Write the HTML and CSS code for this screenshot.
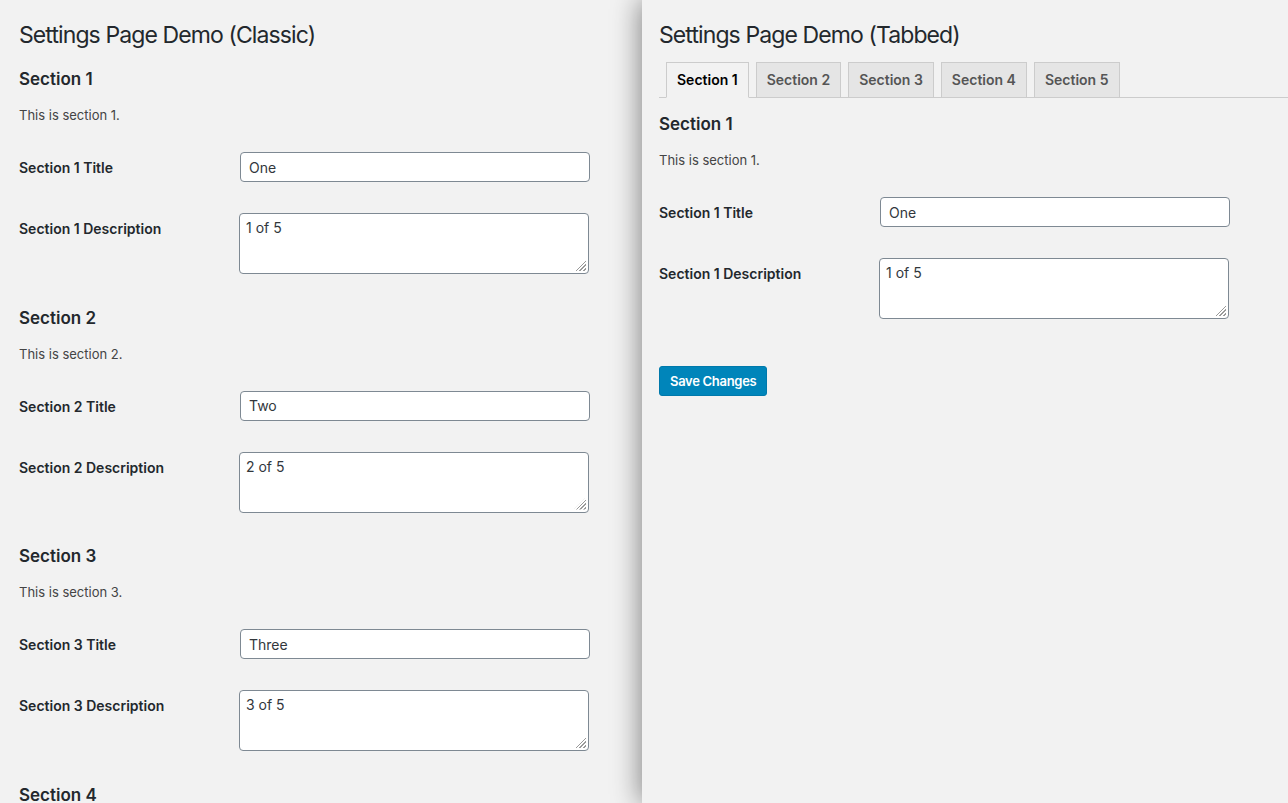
FILE: index.html
```html
<!DOCTYPE html>
<html lang="en">
<head>
<meta charset="utf-8">
<title>Settings Page Demo</title>
<link rel="stylesheet" href="styles.css">
</head>
<body>
<div class="screen">
  <div class="pane pane-classic">
    <h1 class="page-title">Settings Page Demo (Classic)</h1>

    <section class="section">
      <h2 class="section-title">Section 1</h2>
      <p class="section-desc">This is section 1.</p>
      <div class="form-table">
        <div class="row row-input">
          <label class="field-label">Section 1 Title</label>
          <input class="text-input" type="text" value="One">
        </div>
        <div class="row row-textarea">
          <label class="field-label">Section 1 Description</label>
          <span class="area-wrap"><textarea class="text-area">1 of 5</textarea></span>
        </div>
      </div>
    </section>

    <section class="section">
      <h2 class="section-title">Section 2</h2>
      <p class="section-desc">This is section 2.</p>
      <div class="form-table">
        <div class="row row-input">
          <label class="field-label">Section 2 Title</label>
          <input class="text-input" type="text" value="Two">
        </div>
        <div class="row row-textarea">
          <label class="field-label">Section 2 Description</label>
          <span class="area-wrap"><textarea class="text-area">2 of 5</textarea></span>
        </div>
      </div>
    </section>

    <section class="section">
      <h2 class="section-title">Section 3</h2>
      <p class="section-desc">This is section 3.</p>
      <div class="form-table">
        <div class="row row-input">
          <label class="field-label">Section 3 Title</label>
          <input class="text-input" type="text" value="Three">
        </div>
        <div class="row row-textarea">
          <label class="field-label">Section 3 Description</label>
          <span class="area-wrap"><textarea class="text-area">3 of 5</textarea></span>
        </div>
      </div>
    </section>

    <section class="section">
      <h2 class="section-title">Section 4</h2>
      <p class="section-desc">This is section 4.</p>
    </section>
  </div>

  <div class="pane pane-tabbed">
    <h1 class="page-title">Settings Page Demo (Tabbed)</h1>
    <nav class="tabs">
      <a class="tab tab-active">Section 1</a>
      <a class="tab">Section 2</a>
      <a class="tab">Section 3</a>
      <a class="tab">Section 4</a>
      <a class="tab">Section 5</a>
    </nav>
    <section class="section section-tabbed">
      <h2 class="section-title">Section 1</h2>
      <p class="section-desc">This is section 1.</p>
      <div class="form-table">
        <div class="row row-input">
          <label class="field-label">Section 1 Title</label>
          <input class="text-input" type="text" value="One">
        </div>
        <div class="row row-textarea">
          <label class="field-label">Section 1 Description</label>
          <span class="area-wrap"><textarea class="text-area">1 of 5</textarea></span>
        </div>
      </div>
    </section>
    <div class="submit">
      <button class="button-primary" type="button">Save Changes</button>
    </div>
  </div>
</div>
</body>
</html>
```

FILE: styles.css
```css
* { box-sizing: border-box; }

html, body {
  margin: 0;
  padding: 0;
  height: 100%;
  overflow: hidden;
  background: #f2f2f2;
}

body {
  font-family: Inter, "Noto Sans", Roboto, sans-serif;
  color: #23282d;
  font-size: 13px;
}

.screen {
  display: flex;
  width: 1288px;
  height: 803px;
  overflow: hidden;
}

.pane {
  background: #f2f2f2;
  height: 803px;
  overflow: hidden;
  padding-top: 20px;
}

.pane-classic {
  width: 642px;
  flex: 0 0 642px;
  padding-left: 19px;
}

.pane-tabbed {
  flex: 1 1 auto;
  padding-left: 17px;
  position: relative;
  z-index: 1;
  box-shadow: -2px 0 26px rgba(0, 0, 0, 0.45);
}

.page-title {
  margin: 0;
  font-size: 23px;
  font-weight: 400;
  line-height: 30px;
  letter-spacing: -0.9px;
  color: #23282d;
}

.section { margin-top: 17.5px; }
.pane-classic .section:first-of-type { margin-top: 18px; }

.section-title {
  margin: 0;
  font-size: 17px;
  font-weight: 600;
  line-height: 22px;
  color: #23282d;
}

.section-desc {
  margin: 16px 0 0;
  font-size: 13px;
  line-height: 18px;
  color: #444;
}

.form-table { margin-top: 13px; }

.row {
  display: grid;
  grid-template-columns: 220px 352px;
  align-items: start;
}

.row-input { padding: 15px 0; }
.row-textarea { padding: 16px 0 15px; }

.field-label {
  font-size: 14px;
  font-weight: 600;
  line-height: 18px;
  color: #23282d;
  padding-top: 7px;
}

.text-input {
  width: 350px;
  height: 30px;
  margin: 0 1px;
  padding: 0 8px;
  border: 1px solid #7e8993;
  border-radius: 4px;
  background: #fff;
  font-family: inherit;
  font-size: 14px;
  color: #32373c;
  outline: none;
}

.area-wrap {
  position: relative;
  display: block;
  width: 350px;
  height: 61px;
}

.area-wrap::after {
  content: "";
  position: absolute;
  right: 3px;
  bottom: 3px;
  width: 12px;
  height: 12px;
  background: repeating-linear-gradient(135deg, transparent 0 1.5px, #9a9a9a 1.5px 2.6px);
  clip-path: polygon(100% 0, 100% 100%, 0 100%);
  pointer-events: none;
}

.text-area {
  display: block;
  width: 350px;
  height: 61px;
  margin: 0;
  padding: 4px 6px 2px;
  border: 1px solid #7e8993;
  border-radius: 4px;
  background: #fff;
  font-family: inherit;
  font-size: 14px;
  line-height: 20px;
  color: #32373c;
  resize: none;
  outline: none;
}

.tabs {
  display: flex;
  margin-top: 12px;
  margin-right: -20px;
  border-bottom: 1px solid #ccc;
  height: 36px;
}

.tab {
  display: block;
  margin-left: 7px;
  padding: 5px 10px;
  height: 36px;
  border: 1px solid #ccc;
  background: #e5e5e5;
  font-size: 14px;
  font-weight: 600;
  line-height: 24px;
  color: #555;
  white-space: nowrap;
}

.tab-active {
  background: #f2f2f2;
  border-bottom-color: #f2f2f2;
  color: #000;
}

.section-tabbed { margin-top: 15px; }

.submit { margin-top: 32px; }

.button-primary {
  height: 30px;
  padding: 0 10px;
  border: 1px solid #0079ab;
  border-radius: 3px;
  background: #0085ba;
  color: #fff;
  font-family: inherit;
  font-size: 13px;
  font-weight: 600;
  line-height: 28px;
  letter-spacing: -0.3px;
  cursor: pointer;
}
```
